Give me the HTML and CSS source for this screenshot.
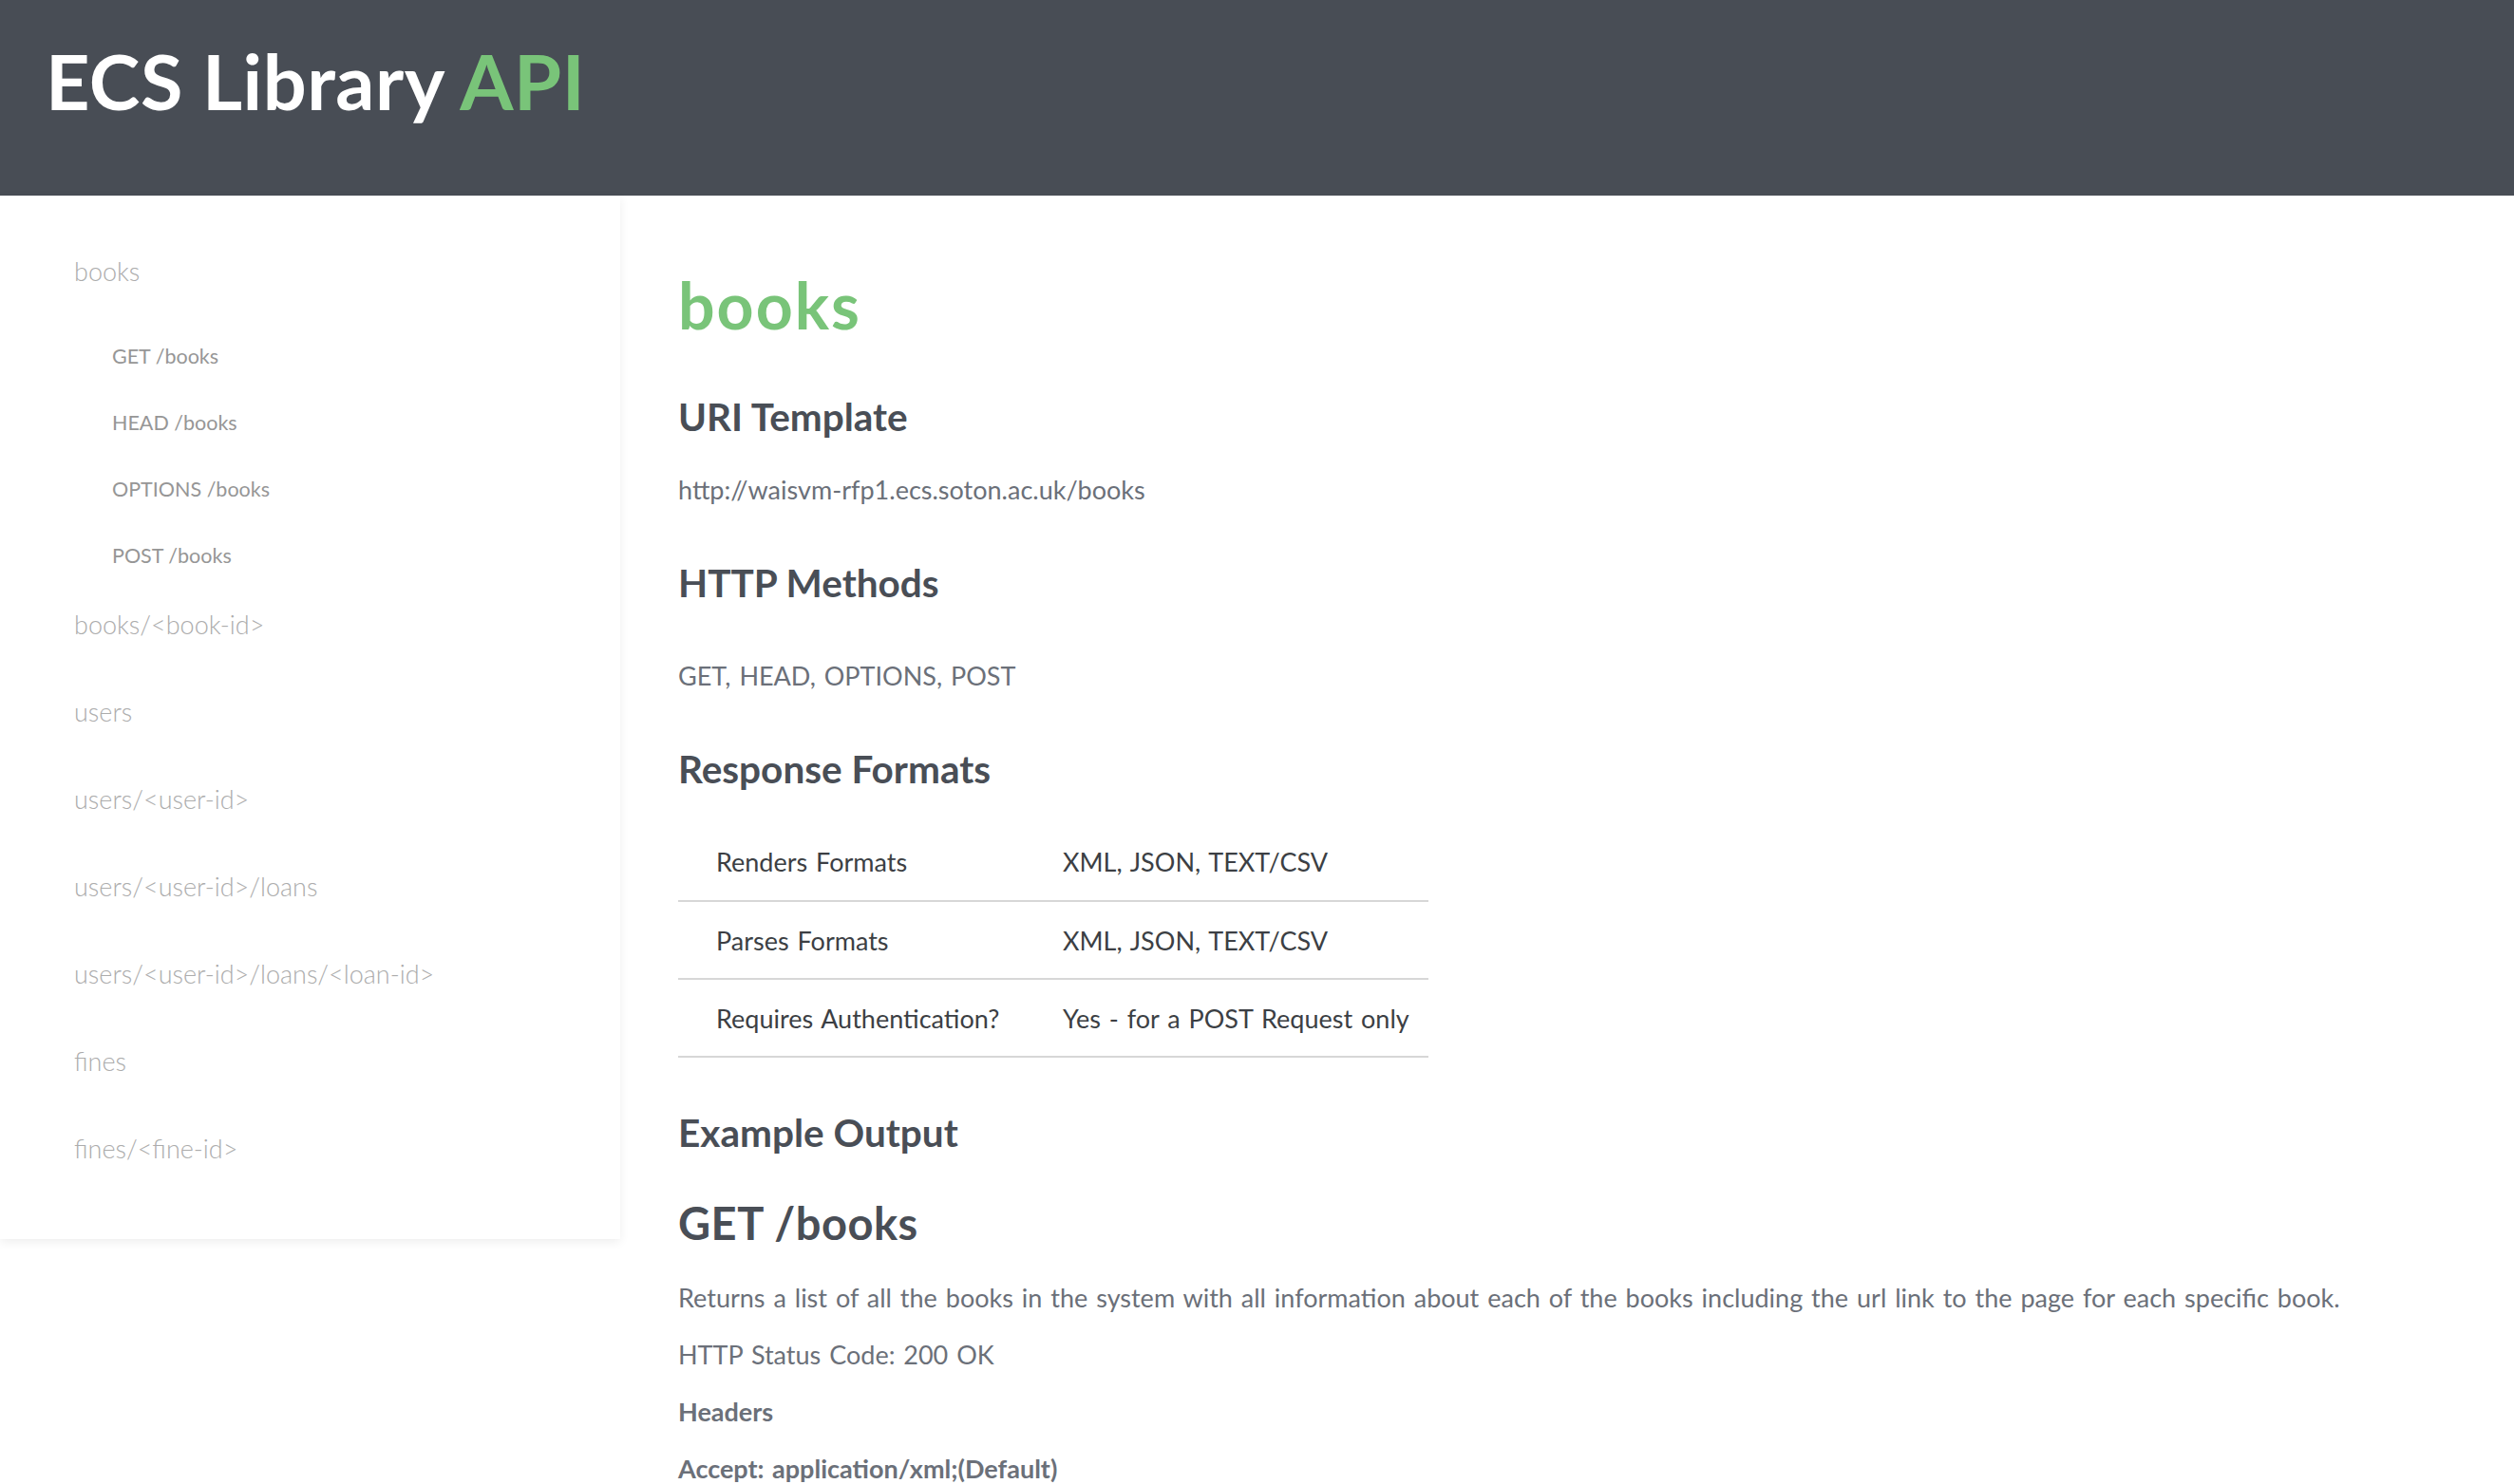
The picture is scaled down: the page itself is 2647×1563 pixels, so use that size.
FILE: index.html
```html
<!DOCTYPE html>
<html lang="en">
<head>
<meta charset="utf-8">
<title>ECS Library API</title>
<link rel="stylesheet" href="styles.css">
</head>
<body>
<header class="topbar">
  <h1 class="brand">ECS Library <span class="brand-accent">API</span></h1>
</header>
<div class="layout">
  <aside class="sidebar">
    <ul class="nav">
      <li>
        <a class="nav-link" href="#books">books</a>
        <ul class="subnav">
          <li><a class="subnav-link" href="#get-books">GET /books</a></li>
          <li><a class="subnav-link" href="#head-books">HEAD /books</a></li>
          <li><a class="subnav-link" href="#options-books">OPTIONS /books</a></li>
          <li><a class="subnav-link" href="#post-books">POST /books</a></li>
        </ul>
      </li>
      <li><a class="nav-link" href="#book">books/&lt;book-id&gt;</a></li>
      <li><a class="nav-link" href="#users">users</a></li>
      <li><a class="nav-link" href="#user">users/&lt;user-id&gt;</a></li>
      <li><a class="nav-link" href="#loans">users/&lt;user-id&gt;/loans</a></li>
      <li><a class="nav-link" href="#loan">users/&lt;user-id&gt;/loans/&lt;loan-id&gt;</a></li>
      <li><a class="nav-link" href="#fines">fines</a></li>
      <li><a class="nav-link" href="#fine">fines/&lt;fine-id&gt;</a></li>
    </ul>
  </aside>
  <main class="content">
    <h2 class="section-title" id="books">books</h2>
    <h3 class="sub-heading sh-uri">URI Template</h3>
    <p class="text t-uri">http://waisvm-rfp1.ecs.soton.ac.uk/books</p>
    <h3 class="sub-heading sh-gap">HTTP Methods</h3>
    <p class="text t-methods">GET, HEAD, OPTIONS, POST</p>
    <h3 class="sub-heading sh-gap">Response Formats</h3>
    <table class="formats">
      <tr><td class="f-key">Renders Formats</td><td class="f-val">XML, JSON, TEXT/CSV</td></tr>
      <tr><td class="f-key">Parses Formats</td><td class="f-val">XML, JSON, TEXT/CSV</td></tr>
      <tr><td class="f-key">Requires Authentication?</td><td class="f-val">Yes - for a POST Request only</td></tr>
    </table>
    <h3 class="sub-heading sh-example">Example Output</h3>
    <h2 class="method-title" id="get-books">GET /books</h2>
    <p class="text t-desc">Returns a list of all the books in the system with all information about each of the books including the url link to the page for each specific book.</p>
    <p class="text t-row">HTTP Status Code: 200 OK</p>
    <p class="text t-row t-strong">Headers</p>
    <p class="text t-row t-strong">Accept: application/xml;(Default)</p>
  </main>
</div>
</body>
</html>
```

FILE: styles.css
```css
* {
  box-sizing: border-box;
}

html,
body {
  margin: 0;
  padding: 0;
}

body {
  font-family: Lato, "Liberation Sans", sans-serif;
  background: #ffffff;
  color: #6b7079;
}

.topbar {
  height: 206px;
  background: #484d55;
  padding: 36px 0 0 48px;
}

.brand {
  margin: 0;
  font-size: 81px;
  font-weight: 700;
  line-height: 97px;
  color: #ffffff;
  letter-spacing: 0.5px;
}

.brand-accent {
  color: #79c479;
}

.layout {
  display: flex;
  align-items: flex-start;
}

.sidebar {
  flex: 0 0 653px;
  padding: 42px 0 41px;
  box-shadow: 0 3px 10px rgba(0, 0, 0, 0.07);
  background: #ffffff;
}

.nav,
.subnav {
  list-style: none;
  margin: 0;
  padding: 0;
}

.nav-link {
  display: block;
  padding: 18px 0 34px 78px;
  line-height: 40px;
  font-size: 27px;
  font-weight: 300;
  color: #acacac;
  text-decoration: none;
}

.subnav-link {
  display: block;
  padding: 16px 0 16px 118px;
  line-height: 38px;
  font-size: 21.5px;
  font-weight: 400;
  color: #969696;
  text-decoration: none;
}

.content {
  flex: 1;
  padding: 74px 40px 40px 61px;
}

.section-title {
  margin: 0;
  font-size: 68px;
  line-height: 81px;
  font-weight: 700;
  color: #79c479;
  letter-spacing: 2px;
}

.sub-heading {
  margin: 0;
  font-size: 40.5px;
  line-height: 48px;
  font-weight: 700;
  color: #494e56;
}

.sh-uri {
  margin-top: 54px;
}

.sh-gap {
  margin-top: 56px;
}

.sh-example {
  margin-top: 55px;
}

.text {
  margin: 0;
  font-size: 27px;
  line-height: 36px;
  color: #6b7079;
  word-spacing: 2px;
}

.t-uri {
  margin-top: 35px;
}

.t-methods {
  margin-top: 56px;
}

.formats {
  margin-top: 33px;
  width: 790px;
  border-collapse: collapse;
  font-size: 27px;
  color: #3c3f44;
  word-spacing: 2px;
}

.formats tr {
  border-bottom: 2px solid #d7d7d7;
}

.formats td {
  height: 82px;
  padding: 0;
  vertical-align: middle;
}

.f-key {
  width: 405px;
  padding-left: 40px !important;
}

.method-title {
  margin: 39px 0 0;
  font-size: 47px;
  line-height: 64px;
  font-weight: 700;
  color: #494e56;
  letter-spacing: 0.5px;
}

.t-desc {
  margin-top: 29px;
}

.t-row {
  margin-top: 24px;
}

.t-strong {
  font-weight: 700;
}
```
